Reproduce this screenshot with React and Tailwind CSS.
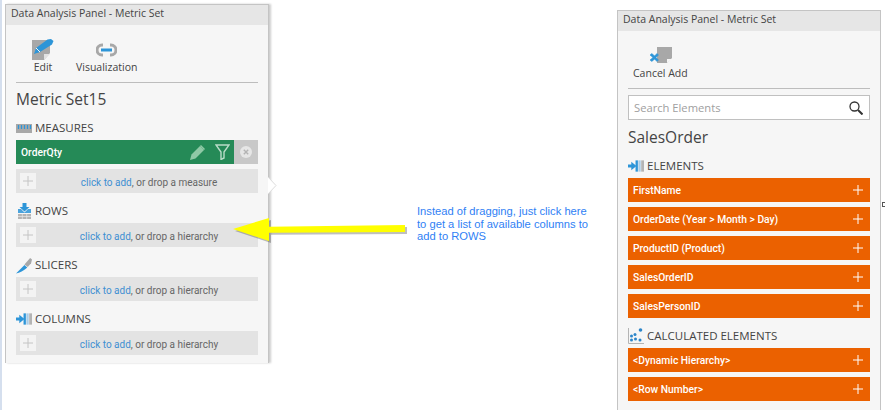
const Plus = ({ className = "text-white" }) => (
  <svg width="10" height="10" viewBox="0 0 10 10" className={className}>
    <path d="M5 0v10M0 5h10" stroke="currentColor" strokeWidth="1" fill="none" />
  </svg>
);

const MeasuresIcon = () => (
  <svg width="16" height="9" viewBox="0 0 16 9">
    <rect width="16" height="9" fill="#a8a8a8" />
    <path d="M2.500 1v4M5.500 1v4M8.500 1v4M11.500 1v4M14.500 1v4" stroke="#2d95d8" strokeWidth="1.200" />
  </svg>
);

const RowsIcon = () => (
  <svg width="13" height="16" viewBox="0 0 13 16">
    <path d="M4.500 0h4v4h3L6.500 8.500 1.500 4h3z" fill="#2d95d8" />
    <path d="M0 6h3l3.500 3.500L10 6h3v4H0z" fill="#4aa3dd" />
    <path d="M0 11h13v5H0z" fill="#b4b4b4" />
    <path d="M0 13.500h13M4.300 11v5M8.700 11v5" stroke="#e8e8e8" strokeWidth="0.700" />
  </svg>
);

const SlicersIcon = () => (
  <svg width="17" height="17" viewBox="0 0 17 17">
    <path d="M0 17 9 8l3 2.500C8 14 4 16 0 17z" fill="#2d95d8" />
    <path d="M9 7.500 15 0.500 17 2 16 6l-3.500 4z" fill="#a8a8a8" />
  </svg>
);

const ColumnsIcon = () => (
  <svg width="17" height="12" viewBox="0 0 17 12">
    <path d="M0 4.500h3.500V1.500L9 6l-5.500 4.500v-3H0z" fill="#2d95d8" />
    <path d="M8 0h2.500v12H8z" fill="#2d95d8" />
    <path d="M11 0h2.500v12H11z" fill="#a9cde8" />
    <path d="M14 0h3v12h-3z" fill="#b4b4b4" />
  </svg>
);

const CalcIcon = () => (
  <svg width="16" height="16" viewBox="0 0 16 16">
    <path d="M0.500 0v15.500H16" stroke="#b4b4b4" strokeWidth="1" fill="none" />
    <g fill="#2d86c9">
      <circle cx="3.500" cy="8" r="1.500" />
      <circle cx="7" cy="6.500" r="1.500" />
      <circle cx="3.500" cy="12" r="1.500" />
      <circle cx="7.500" cy="11" r="1.500" />
      <circle cx="12" cy="12" r="1.500" />
      <circle cx="12.500" cy="2" r="1.800" />
    </g>
  </svg>
);

const EditIcon = () => (
  <svg width="22" height="21" viewBox="0 0 22 21">
    <path d="M0 1h18v13l-6 7H0z" fill="#a8a8a8" />
    <path d="M12 21v-6h6z" fill="#e2e2e2" />
    <path d="M2 15 4 9 15.500 0.500 19 0l2.500 2-1.500 3.500L8 13z" fill="#2d95d8" />
    <path d="M4 9l4 4" stroke="#f6f6f6" strokeWidth="1" />
  </svg>
);

const VizIcon = () => (
  <svg width="21" height="14" viewBox="0 0 21 14">
    <path d="M7 2H6a5 5 0 0 0 0 10h1M14 2h1a5 5 0 0 1 0 10h-1" stroke="#a8a8a8" strokeWidth="3" fill="none" />
    <rect x="5" y="5.500" width="11" height="3" fill="#2d95d8" />
  </svg>
);

const CancelIcon = () => (
  <svg width="23" height="16" viewBox="0 0 23 16">
    <path d="M8 0h15v11l-5 5H8z" fill="#a8a8a8" />
    <path d="M18 16v-4h5z" fill="#f6f6f6" />
    <path d="M3 6.500 5.500 9 8 6.500 9.500 8 7 10.500 9.500 13 8 14.500 5.500 12 3 14.500 1 13l3-2.500L1 8z" fill="#2d95d8" stroke="#2d95d8" strokeWidth="0.600" />
  </svg>
);

const PencilIcon = () => (
  <svg width="15" height="15" viewBox="0 0 15 15">
    <path d="M0 15 1.500 9.500 10 1l4 4-8.500 8.500z" fill="#8fc9a6" />
    <path d="M11 0l4 4-1 1-4-4z" fill="#8fc9a6" />
  </svg>
);

const FunnelIcon = () => (
  <svg width="15" height="16" viewBox="0 0 15 16">
    <path d="M1 1h13L9 8v6l-3 1.500V8z" fill="none" stroke="#b9dcc8" strokeWidth="1.400" />
  </svg>
);

const ClearIcon = () => (
  <svg width="12" height="12" viewBox="0 0 12 12">
    <circle cx="6" cy="6" r="6" fill="#e6e6e6" />
    <path d="M3.800 3.800l4.400 4.400M8.200 3.800l-4.400 4.400" stroke="#b4b4b4" strokeWidth="1.400" />
  </svg>
);

const SearchIcon = () => (
  <svg width="14" height="14" viewBox="0 0 14 14">
    <circle cx="5.500" cy="5.500" r="4.500" fill="none" stroke="#333" strokeWidth="1.300" />
    <path d="M9 9l4.500 4.500" stroke="#333" strokeWidth="2" />
  </svg>
);

const SectionHeader = ({ icon, label }) => (
  <div className="flex items-center gap-[3px] h-[30px] pt-[6px] text-[11.500px] text-[#444]">
    <span className="w-[16px] flex justify-center shrink-0">{icon}</span>
    <span>{label}</span>
  </div>
);

const DropRow = ({ hint }) => (
  <div className="flex items-center h-[24px] bg-[#e3e3e3] pl-[4px] text-[10px] text-[#666] font-['Roboto',sans-serif]">
    <div className="w-[16px] h-[16px] bg-[#f3f3f3] flex items-center justify-center shrink-0">
      <Plus className="text-[#c4c4c4]" />
    </div>
    <div className="flex-1 text-center pl-[4px] pt-[2px]">
      <span className="text-[#3f8fd2]">click to add</span>, or drop a {hint}
    </div>
  </div>
);

const ElementRow = ({ label }) => (
  <div className="flex items-center justify-between h-[24px] bg-[#eb6100] pl-[5px] pr-[7px] text-[10.300px] font-medium text-white font-['Roboto',sans-serif]">
    <span className="pt-[2px]">{label}</span>
    <Plus />
  </div>
);

const PanelTitle = () => (
  <div className="h-[20px] bg-[#e6e6e6] pl-[5px] pb-[2px] flex items-center text-[10.500px] text-[#444]">
    Data Analysis Panel - Metric Set
  </div>
);

const elements = [
  "FirstName",
  "OrderDate (Year > Month > Day)",
  "ProductID (Product)",
  "SalesOrderID",
  "SalesPersonID",
];

export default function App() {
  return (
    <div className="relative flex w-[885px] h-[410px] overflow-hidden bg-white font-['Open_Sans',sans-serif]">
      <div className="w-[2px] h-full bg-[#d5dfee] shrink-0" />

      {/* Metric set panel */}
      <div className="relative ml-[3px] mt-[4px] w-[264px] h-[359px] shrink-0 bg-[#f6f6f6] border-x border-t border-[#c4c4c4] shadow-[2px_0_2px_rgba(0,0,0,0.2)]">
        <PanelTitle />
        <div className="px-[10px]">
          <div className="flex items-start h-[58px] border-b border-[#bdbdbd] pt-[14px] text-[10.500px] leading-[14px] text-[#444]">
            <div className="flex flex-col items-center w-[54px]">
              <EditIcon />
              <span>Edit</span>
            </div>
            <div className="flex flex-col items-center ml-[6px]">
              <span className="h-[21px] flex items-center"><VizIcon /></span>
              <span>Visualization</span>
            </div>
          </div>
          <div className="h-[34px] flex items-center text-[15.500px] text-[#444]">Metric Set15</div>
          <div className="-mt-[7px]">
            <SectionHeader icon={<MeasuresIcon />} label="MEASURES" />
          </div>
          <div className="flex h-[24px] text-[10.300px] font-medium text-white font-['Roboto',sans-serif]">
            <div className="flex-1 flex items-center bg-[#258a57] pl-[5px] pr-[4px]">
              <span className="flex-1 pt-[2px]">OrderQty</span>
              <span className="mr-[10px]"><PencilIcon /></span>
              <FunnelIcon />
            </div>
            <div className="w-[24px] bg-[#c8c8c8] flex items-center justify-center">
              <ClearIcon />
            </div>
          </div>
          <div className="mt-[5px]">
            <DropRow hint="measure" />
          </div>
          <SectionHeader icon={<RowsIcon />} label="ROWS" />
          <DropRow hint="hierarchy" />
          <SectionHeader icon={<SlicersIcon />} label="SLICERS" />
          <DropRow hint="hierarchy" />
          <SectionHeader icon={<ColumnsIcon />} label="COLUMNS" />
          <DropRow hint="hierarchy" />
        </div>
        {/* notch pointing at the drop row */}
        <svg width="9" height="18" viewBox="0 0 9 18" className="absolute left-[262px] top-[172px]">
          <path d="M0 0l8 8.500L0 17z" fill="#fff" />
          <path d="M0 0l8 8.500L0 17" fill="none" stroke="#dcdcdc" />
        </svg>
      </div>

      {/* Callout text */}
      <div className="flex-1 pl-[148px] pt-[205px] text-[11.200px] leading-[12.500px] text-[#2f7ff5] font-['Liberation_Sans',sans-serif]">
        <p className="w-[175px]">Instead of dragging, just click here to get a list of available columns to add to ROWS</p>
      </div>

      {/* Element picker panel */}
      <div className="mt-[10px] mr-[4px] w-[264px] shrink-0 bg-[#f6f6f6] border-x border-t border-[#c4c4c4]">
        <PanelTitle />
        <div className="px-[10px]">
          <div className="flex flex-col items-start h-[58px] border-b border-[#bdbdbd] pt-[16px] text-[10.500px] leading-[14px] text-[#444]">
            <div className="flex flex-col items-center ml-[5px]">
              <CancelIcon />
              <span className="mt-[3px]">Cancel Add</span>
            </div>
          </div>
          <div className="mt-[6px] flex items-center justify-between h-[25px] bg-white border border-[#c0c0c0] pl-[5px] pr-[6px] text-[11.200px] text-[#a0a0a0]">
            <span className="pt-[2px]">Search Elements</span>
            <SearchIcon />
          </div>
          <div className="h-[36px] flex items-center text-[15.500px] text-[#444]">SalesOrder</div>
          <div className="-mt-[8px]">
            <SectionHeader icon={<ColumnsIcon />} label="ELEMENTS" />
          </div>
          <div className="flex flex-col gap-[5px]">
            {elements.map((label) => (
              <ElementRow key={label} label={label} />
            ))}
          </div>
          <SectionHeader icon={<CalcIcon />} label="CALCULATED ELEMENTS" />
          <div className="flex flex-col gap-[5px]">
            <ElementRow label="<Dynamic Hierarchy>" />
            <ElementRow label="<Row Number>" />
          </div>
        </div>
      </div>

      {/* Annotation arrow drawn over the panel */}
      <svg width="180" height="32" viewBox="0 0 180 32" className="absolute left-[231px] top-[215px]">
        <path d="M2 14 38 3v8.700L174 10v7L38 17.700V26z" fill="#000" opacity="0.25" transform="translate(2 2)" />
        <path d="M2 14 38 3v8.700L174 10v7L38 17.700V26z" fill="#ffff00" />
      </svg>

      {/* stray resize handle at the window edge */}
      <div className="absolute left-[882px] top-[202px] w-[3px] h-[5px] border-y border-l border-[#555]" />
    </div>
  );
}
